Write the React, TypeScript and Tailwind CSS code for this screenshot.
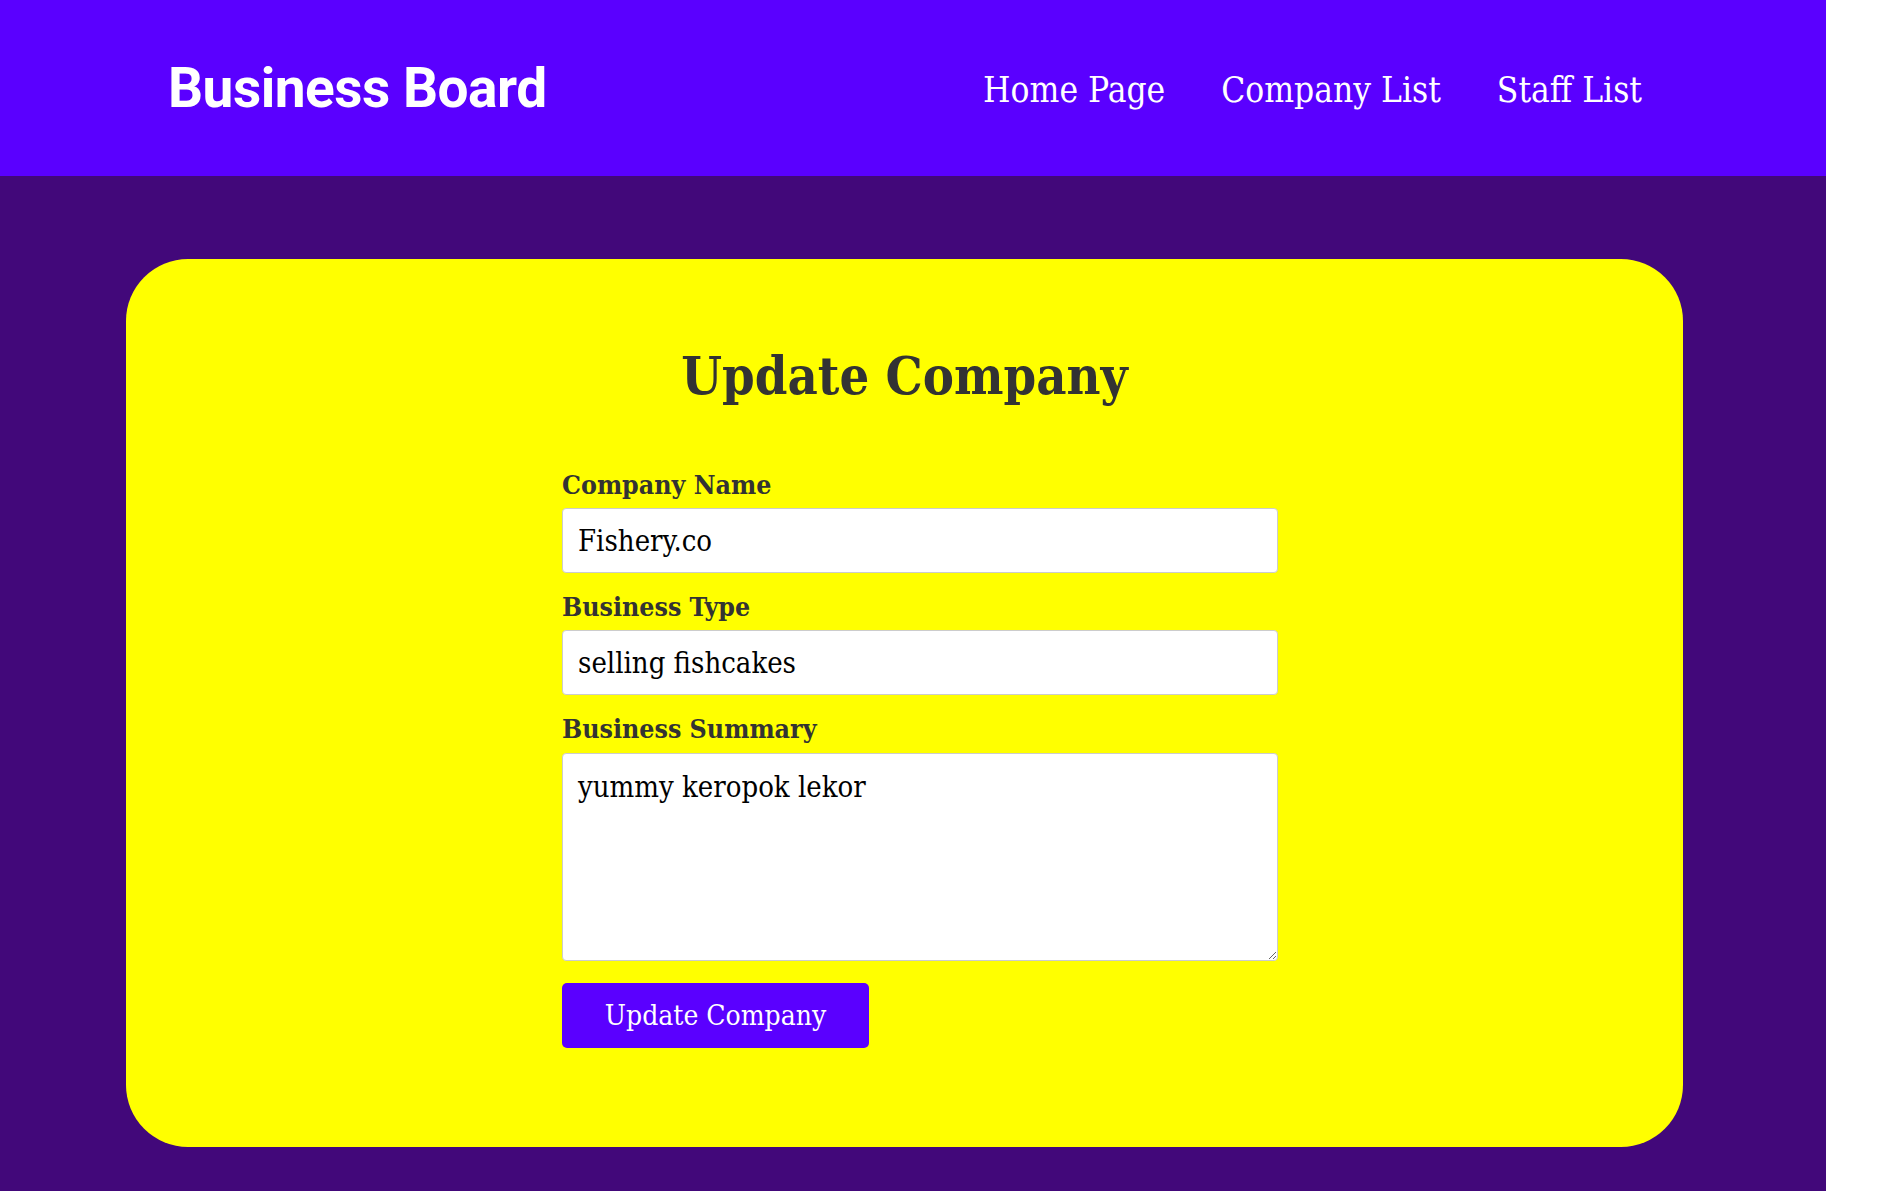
import React, { useState } from 'react';

const slab = { fontFamily: '"Roboto Slab", "DejaVu Serif Condensed", "DejaVu Serif", serif' };

const NavBar: React.FC = () => {
  const links = ['Home Page', 'Company List', 'Staff List'];

  return (
    <nav className="h-[176px] bg-[#5a00ff] flex items-center justify-between pl-[168px] pr-[184px]">
      <h1
        className="text-white text-[55px] font-bold leading-none tracking-[-0.5px]"
        style={{ fontFamily: 'Roboto, "Liberation Sans", sans-serif' }}
      >
        Business Board
      </h1>
      <ul className="flex items-center gap-[56px] pt-[4px]">
        {links.map((link) => (
          <li key={link}>
            <a href="#" className="text-white text-[35px] leading-none" style={slab}>
              {link}
            </a>
          </li>
        ))}
      </ul>
    </nav>
  );
};

const UpdateCompany: React.FC = () => {
  const [name, setName] = useState('Fishery.co');
  const [type, setType] = useState('selling fishcakes');
  const [summary, setSummary] = useState('yummy keropok lekor');

  return (
    <div className="ml-[126px] w-[1557px] h-[888px] bg-[#ffff00] rounded-[62px] pt-[84px]" style={slab}>
      <h2 className="text-center text-[52px] font-bold leading-[66px] text-[#333333]">Update Company</h2>

      <form className="ml-[436px] w-[716px] mt-[61px]" onSubmit={(e) => e.preventDefault()}>
        <label className="block text-[26.5px] font-bold leading-[30px] text-[#333333] mb-[8px]">Company Name</label>
        <input
          value={name}
          onChange={(e) => setName(e.target.value)}
          className="block w-full h-[65px] bg-white border border-[#cccccc] rounded-[4px] px-[15px] text-[29px] text-black outline-none mb-[19px]"
          style={slab}
        />

        <label className="block text-[26.5px] font-bold leading-[30px] text-[#333333] mb-[8px]">Business Type</label>
        <input
          value={type}
          onChange={(e) => setType(e.target.value)}
          className="block w-full h-[65px] bg-white border border-[#cccccc] rounded-[4px] px-[15px] text-[29px] text-black outline-none mb-[19px]"
          style={slab}
        />

        <label className="block text-[26.5px] font-bold leading-[30px] text-[#333333] mb-[9px]">Business Summary</label>
        <textarea
          value={summary}
          onChange={(e) => setSummary(e.target.value)}
          className="block w-full h-[208px] bg-white border border-[#cccccc] rounded-[4px] px-[15px] py-[12px] text-[29px] text-black outline-none"
          style={slab}
        />

        <button
          type="submit"
          className="mt-[22px] h-[65px] w-[307px] bg-[#5a00ff] text-white text-[28px] rounded-[5px]"
          style={slab}
        >
          Update Company
        </button>
      </form>
    </div>
  );
};

export default function App() {
  return (
    <div className="w-[1826px] min-h-[1191px] bg-[#42087a]">
      <NavBar />
      <main className="pt-[83px]">
        <UpdateCompany />
      </main>
    </div>
  );
}
